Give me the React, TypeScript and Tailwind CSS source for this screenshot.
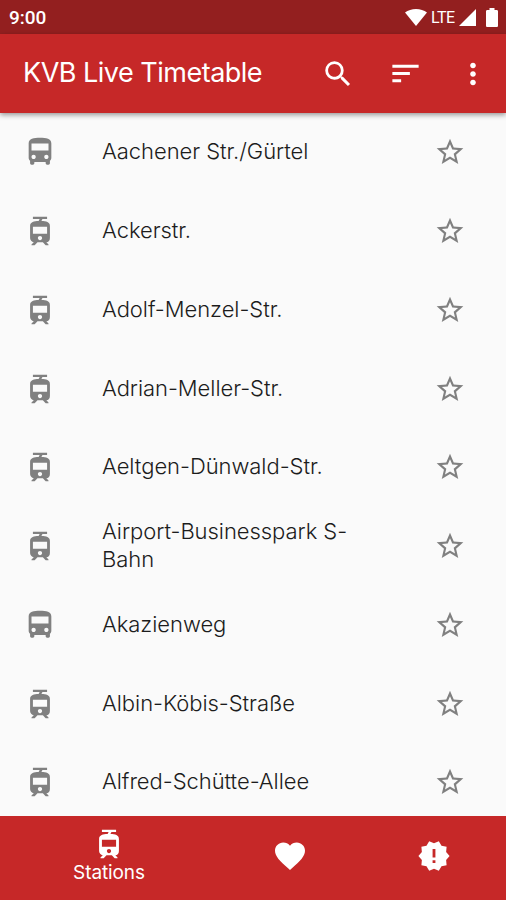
import {
  MdDirectionsBus,
  MdFavorite,
  MdMoreVert,
  MdNewReleases,
  MdSearch,
  MdSort,
  MdStarBorder,
  MdTram,
} from 'react-icons/md';

const stations = [
  { name: 'Aachener Str./Gürtel', type: 'bus' },
  { name: 'Ackerstr.', type: 'tram' },
  { name: 'Adolf-Menzel-Str.', type: 'tram' },
  { name: 'Adrian-Meller-Str.', type: 'tram' },
  { name: 'Aeltgen-Dünwald-Str.', type: 'tram' },
  { name: 'Airport-Businesspark S-Bahn', type: 'tram' },
  { name: 'Akazienweg', type: 'bus' },
  { name: 'Albin-Köbis-Straße', type: 'tram' },
  { name: 'Alfred-Schütte-Allee', type: 'tram' },
];

const StatusBar = () => (
  <div className="flex h-[34px] shrink-0 items-center justify-between bg-[#931f1f] pr-2 pl-[9px] text-white">
    <span className="pt-px font-['Roboto'] text-[19px] font-medium leading-none">9:00</span>
    <div className="flex items-center">
      <svg className="h-[17px] w-[22px]" viewBox="0 0 22 17" fill="currentColor">
        <path d="M11 17 0 3.6C3 1.2 6.800 0 11 0s8 1.200 11 3.600z" />
      </svg>
      <span className="ml-1 w-7 pt-px font-['Roboto'] text-[16px] leading-none tracking-[-0.5px]">LTE</span>
      <svg className="h-[17px] w-[17px]" viewBox="0 0 17 17" fill="currentColor">
        <path d="M17 0v17H0z" />
      </svg>
      <svg className="ml-[10px] h-[19px] w-3" viewBox="0 0 12 19" fill="currentColor">
        <path d="M3.500 0h5v2h2.200c.7 0 1.300.6 1.300 1.300v14.400c0 .7-.6 1.300-1.300 1.300H1.300C.6 19 0 18.400 0 17.700V3.300C0 2.600.6 2 1.300 2h2.200z" />
      </svg>
    </div>
  </div>
);

const AppBar = () => (
  <header className="z-10 flex h-[79px] shrink-0 items-center bg-[#c62828] pl-[23px] text-white shadow-[0_2px_5px_rgba(0,0,0,0.4)]">
    <h1 className="w-[298px] whitespace-nowrap pb-0.5 text-[27px] font-normal leading-none tracking-[-0.5px]">
      KVB Live Timetable
    </h1>
    <MdSearch className="size-[34px]" />
    <MdSort className="ml-[33px] size-[35px]" />
    <MdMoreVert className="ml-[33px] size-[34px]" />
  </header>
);

const StationRow = ({ name, type }: { name: string; type: string }) => {
  const Icon = type === 'bus' ? MdDirectionsBus : MdTram;

  return (
    <li className="flex h-[78.75px] shrink-0 items-center pl-[23px] text-[#808080]">
      <Icon className="size-[34px]" />
      <span className="ml-[45px] w-[260px] pb-0.5 text-[22px] font-light leading-7 tracking-[-0.05px] text-[#1c1c1c]">
        {name}
      </span>
      <MdStarBorder className="ml-[72px] size-[32px]" />
    </li>
  );
};

const BottomNav = () => (
  <nav className="flex h-[84px] shrink-0 items-center bg-[#c62828] pb-[5px] text-white">
    <div className="flex w-[218px] flex-col items-center">
      <MdTram className="size-[34px]" />
      <span className="text-[19px] leading-6 tracking-[-0.1px]">Stations</span>
    </div>
    <div className="flex w-36 justify-center">
      <MdFavorite className="size-9" />
    </div>
    <div className="flex w-36 justify-center">
      <MdNewReleases className="size-[34px]" />
    </div>
  </nav>
);

const App = () => (
  <div className="flex h-[900px] w-[506px] flex-col overflow-hidden bg-[#fafafa] font-['Inter',sans-serif]">
    <StatusBar />
    <AppBar />
    <ul className="flex min-h-0 flex-1 flex-col overflow-hidden">
      {stations.map((station) => (
        <StationRow key={station.name} {...station} />
      ))}
    </ul>
    <BottomNav />
  </div>
);

export default App;
